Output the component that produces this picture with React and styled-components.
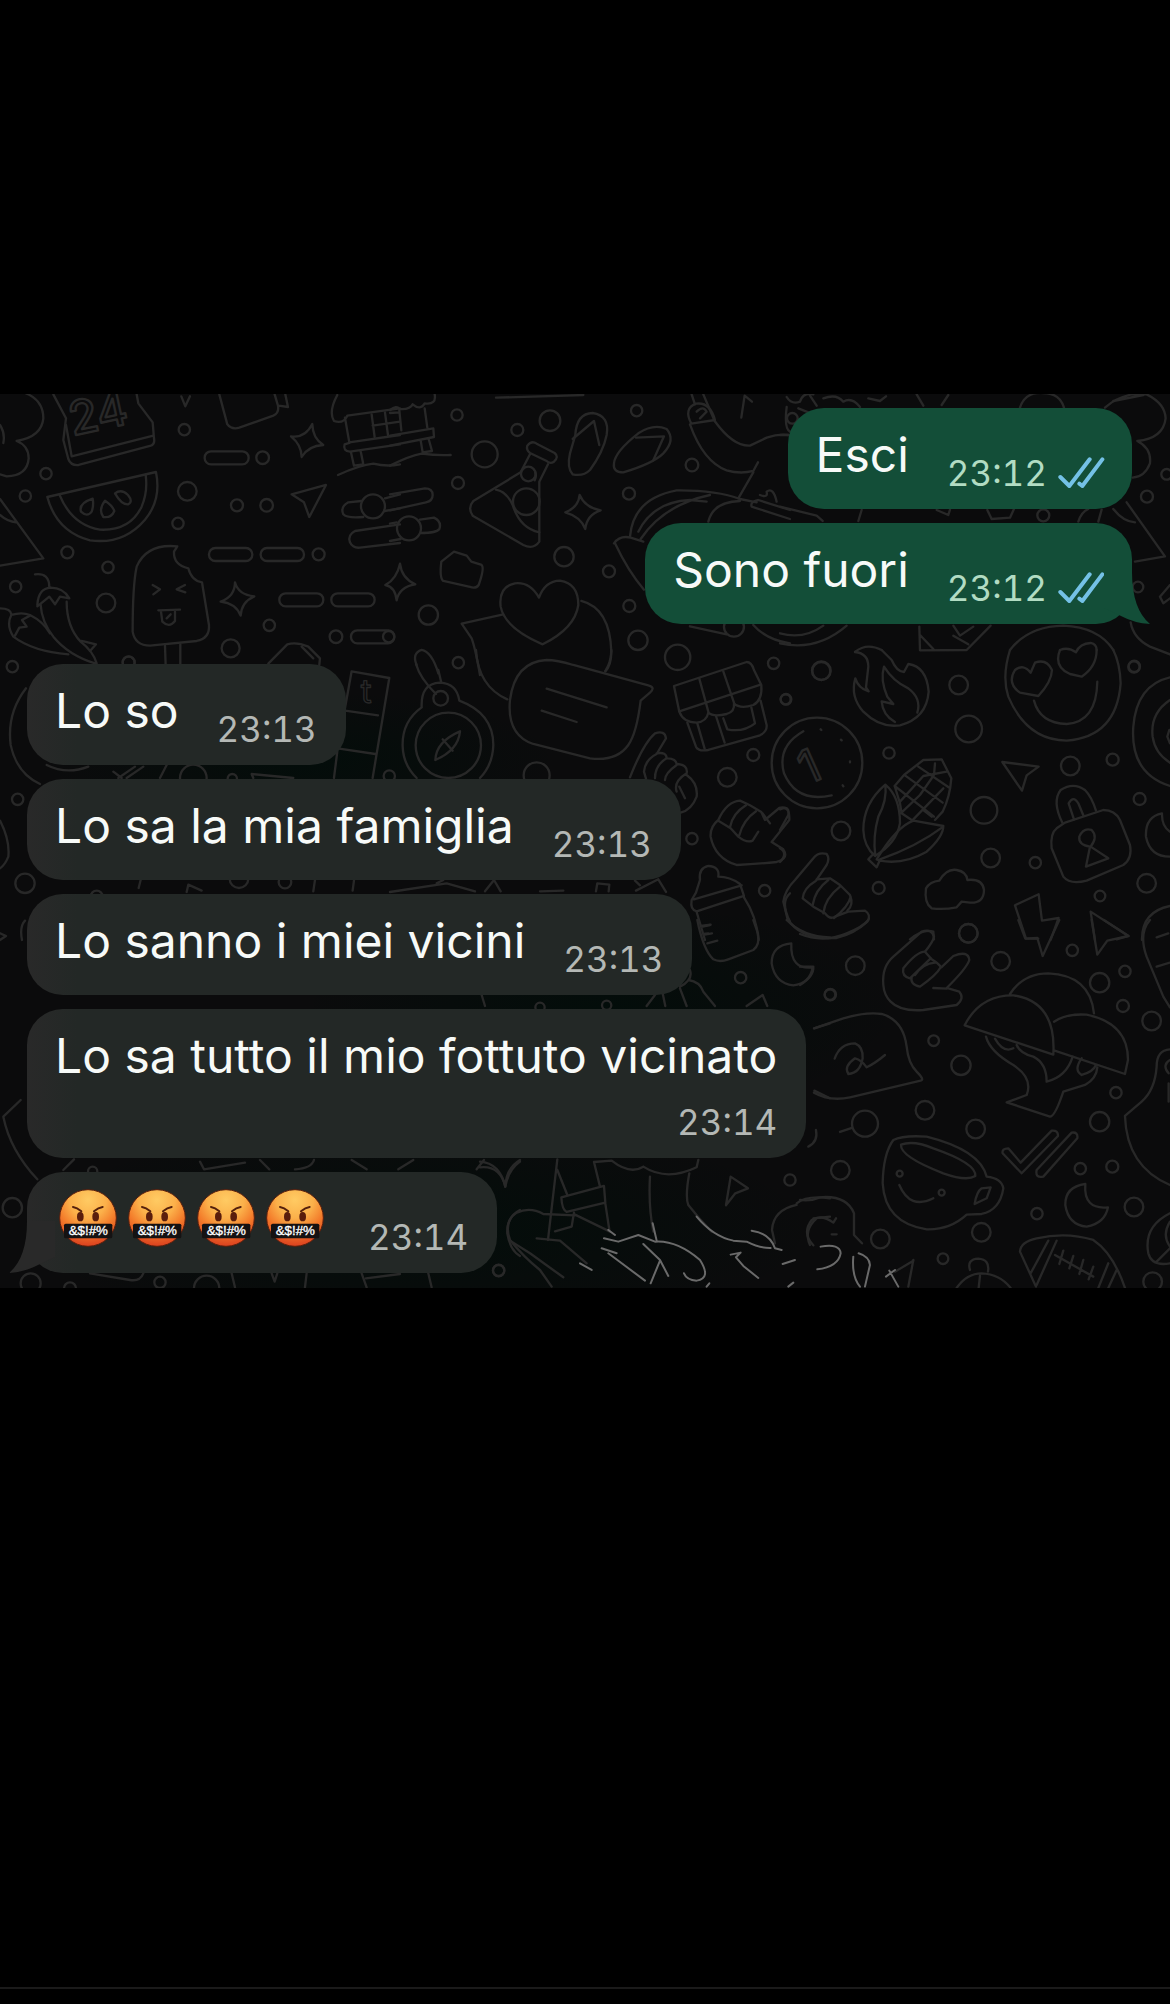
import styled, { createGlobalStyle } from "styled-components";

const colors = {
    black: "#000000",
    wallpaper: "#0b0b0c",
    doodle: "#282828",
    incoming: "#232826",
    outgoing: "#134e38",
    text: "#f7faf8",
    timeIn: "#b4b8b5",
    timeOut: "#b2dcc3",
    tick: "#74c1e6",
    line: "#1a1a1a",
};

const GlobalStyle = createGlobalStyle`
    body {
        margin: 0;
        background: ${colors.black};
        font-family: "Inter", "Liberation Sans", sans-serif;
    }
`;

const Page = styled.div`
    min-height: 100vh;
    display: flex;
    flex-direction: column;
    background: ${colors.black};
`;

const TopSpace = styled.div`
    height: 394px;
`;

const Chat = styled.main`
    position: relative;
    overflow: hidden;
    background: ${colors.wallpaper};
`;

const Wallpaper = styled.svg`
    position: absolute;
    inset: 0;
    width: 100%;
    height: 100%;
    fill: none;
    stroke: ${colors.doodle};
    stroke-width: 7;
    stroke-linecap: round;
    stroke-linejoin: round;
`;

const Messages = styled.ul`
    position: relative;
    margin: 0;
    padding: 14px 38px 15px 27px;
    list-style: none;
    display: flex;
    flex-direction: column;
    gap: 14px;
`;

const Bubble = styled.li`
    position: relative;
    align-self: ${(p) => (p.$mine ? "flex-end" : "flex-start")};
    display: flex;
    flex-direction: ${(p) => (p.$stacked ? "column" : "row")};
    align-items: flex-end;
    gap: ${(p) => (p.$stacked ? "12px" : "38px")};
    margin-top: ${(p) => (p.$newGroup ? "26px" : "0")};
    padding: 11px ${(p) => (p.$mine ? "27px" : "29px")} 18px 28px;
    border-radius: 36px;
    background: ${(p) =>
        p.$mine ? colors.outgoing : `linear-gradient(90deg, #292929 0, ${colors.incoming} 50px)`};
`;

const Text = styled.span`
    color: ${colors.text};
    font-size: 48px;
    line-height: 72px;
    white-space: nowrap;
`;

const Emojis = styled.span`
    height: 70px;
    padding: 0 6px 2px 4px;
    display: flex;
    align-items: center;
    gap: 11px;
`;

const Meta = styled.span`
    display: flex;
    align-items: center;
    gap: 11px;
    color: ${(p) => (p.$mine ? colors.timeOut : colors.timeIn)};
    font-size: 35px;
    font-variant-numeric: tabular-nums;
    line-height: 36px;
`;

const Tail = styled.svg`
    position: absolute;
    bottom: 0;
    ${(p) => (p.$mine ? "right: -18px;" : "left: -18px; transform: scaleX(-1);")}
    fill: ${(p) => (p.$mine ? colors.outgoing : "#292929")};
`;

const BottomLine = styled.hr`
    width: 100%;
    height: 2px;
    margin: auto 0 15px;
    border: 0;
    background: ${colors.line};
`;

const messages = [
    { text: "Esci", time: "23:12", mine: true },
    { text: "Sono fuori", time: "23:12", mine: true, tail: true },
    { text: "Lo so", time: "23:13", newGroup: true },
    { text: "Lo sa la mia famiglia", time: "23:13" },
    { text: "Lo sanno i miei vicini", time: "23:13" },
    { text: "Lo sa tutto il mio fottuto vicinato", time: "23:14", stacked: true },
    { emojis: 4, time: "23:14", tail: true },
];

function Ticks() {
    return (
        <svg width="47" height="32" viewBox="0 0 141 96" fill="none" stroke={colors.tick} strokeWidth="12" strokeLinecap="round" strokeLinejoin="round" role="img" aria-label="Letto">
            <path d="M7 60 L34 87 L95 7" />
            <path d="M64 80 L73 87 L133 7" />
        </svg>
    );
}

function CursingFace() {
    return (
        <svg width="58" height="58" viewBox="0 0 174 174" role="img" aria-label="faccina che impreca">
            <defs>
                <radialGradient id="face" cx="0.5" cy="0.18" r="0.85">
                    <stop offset="0" stopColor="#ffcb63" />
                    <stop offset="0.38" stopColor="#fbb04a" />
                    <stop offset="0.65" stopColor="#f37b2a" />
                    <stop offset="1" stopColor="#d83a1e" />
                </radialGradient>
            </defs>
            <circle cx="87" cy="87" r="85" fill="url(#face)" stroke="#5c1f0c" strokeWidth="3" />
            <g fill="none" stroke="#54200c" strokeWidth="6" strokeLinecap="round">
                <path d="M42 54 Q54 56 67 67" />
                <path d="M131 54 Q118 56 105 67" />
            </g>
            <ellipse cx="64" cy="83" rx="10" ry="14" fill="#5a1d0c" />
            <ellipse cx="110" cy="83" rx="10" ry="14" fill="#5a1d0c" />
            <rect x="15" y="104" width="145" height="44" rx="5" fill="#151212" />
            <text x="88" y="139" textAnchor="middle" fontFamily="Liberation Sans, sans-serif" fontSize="40" stroke="#fff" strokeWidth="1" fill="#fff">
                &amp;$!#%
            </text>
        </svg>
    );
}

// circles are [x, y, radius], pills are [x, y, width]
function Patch({ x, y, circles = [], pills = [], paths = [], children }) {
    return (
        <g transform={`translate(${x} ${y}) scale(0.3333)`}>
            {circles.map(([cx, cy, r]) => (
                <circle key={`${cx}-${cy}`} cx={cx} cy={cy} r={r} />
            ))}
            {pills.map(([px, py, w]) => (
                <rect key={`${px}-${py}`} x={px} y={py} width={w} height="39" rx="19" />
            ))}
            {paths.map((d) => (
                <path key={d} d={d} />
            ))}
            {children}
        </g>
    );
}

const topLeft = {
    circles: [
        [138, 266, 17], [76, 333, 17], [553, 134, 17], [562, 319, 28], [534, 415, 17], [788, 218, 19],
        [711, 361, 18], [800, 361, 19], [202, 502, 18], [324, 547, 17], [47, 605, 17], [318, 654, 28],
        [956, 508, 18], [808, 721, 17], [692, 790, 27], [1008, 755, 19], [37, 845, 17], [386, 832, 18],
        [1119, 364, 36],
    ],
    pills: [[614, 199, 132], [627, 489, 130], [782, 489, 130], [838, 625, 132], [994, 625, 130], [1053, 736, 130]],
    paths: [
        // cloud
        "M75 24 Q130 45 130 100 Q125 155 50 168 Q86 182 86 220 Q82 272 20 274 L0 268",
        "M0 120 Q16 145 10 174",
        // calendar
        "M160 28 L198 100 L190 165 L205 222 Q212 242 236 240 L450 183 Q466 178 462 160 L458 112 L415 55 L410 28",
        "M198 120 L215 214 L460 152",
        // watermelon
        "M142 336 L468 261 Q485 345 435 404 Q370 480 270 466 Q170 440 142 336 Z",
        "M178 328 Q215 420 300 434 Q390 438 425 365 Q444 320 437 270",
        "M278 341 Q235 355 243 380 Q262 398 275 380 Q282 360 278 341 Z",
        "M315 347 Q294 375 310 396 Q334 400 343 378 Q338 362 315 347 Z",
        "M345 325 Q364 310 384 330 Q400 350 385 358 Q365 360 345 325 Z",
        // pennant
        "M0 342 L130 520 L0 542 M0 390 Q22 410 48 412",
        // ice lolly
        "M532 484 Q440 475 410 545 Q398 600 398 740 Q405 782 450 782 L590 768 Q630 760 627 720 L606 592 Q575 588 565 550 Q520 540 522 500 Z",
        "M495 782 L497 840 M541 778 L541 840",
        "M458 600 L480 613 L460 628 M555 600 L530 613 L556 622",
        "M475 676 L540 674 M483 680 L487 710 Q508 730 525 708 L525 680 M500 700 L512 688",
        // chillies
        "M105 568 Q148 562 148 608 M112 660 Q115 610 152 608 Q190 608 208 640 L180 635 L165 658 L148 635 L112 664",
        "M122 660 Q125 710 160 755 Q205 810 285 835 M200 650 Q200 725 242 770 Q280 800 290 835",
        "M0 670 Q32 670 34 688 M34 690 Q65 680 90 690 Q130 710 150 745 M34 690 Q18 720 40 755 Q100 800 205 808",
        "M45 752 L58 728 L80 725 L66 705 L90 692 M245 768 L288 778 L270 798",
        // sparkles and arrow
        "M937 117 Q938 160 970 180 Q925 182 905 216 Q905 180 873 154 Q915 160 937 117 Z",
        "M705 592 Q715 630 763 634 Q725 650 722 692 Q708 655 662 650 Q705 635 705 592 Z",
        "M978 300 L875 328 L912 352 L928 396 Z",
        // bag
        "M658 28 L682 118 Q695 135 718 128 L820 92 Q838 85 834 62 L824 28 M836 62 L864 66 L856 28",
        "M544 34 L556 64 L570 34",
        // market stall
        "M1012 30 Q985 80 1002 108 Q1030 118 1042 92 L1200 70 M1035 98 L1048 172 L1200 150",
        "M1200 178 L1050 200 Q1028 198 1034 178 L1048 174 M1053 202 L1062 242 L1090 238 L1082 198 M1115 88 L1124 156 M1155 82 L1164 150 M1118 122 L1200 110",
        "M1014 270 Q1080 240 1120 236 Q1160 246 1200 238",
        // sliders
        "M1084 348 L1045 352 Q1020 366 1030 388 Q1040 400 1090 396 M1155 340 L1200 328 M1154 378 L1200 370",
        "M1200 418 L1065 438 Q1042 450 1050 472 Q1058 490 1080 488 L1200 474",
        // case
        "M805 836 L862 778 Q890 770 925 785 L960 820 L958 840 M905 785 L940 820",
    ],
};

const topMiddle = {
    circles: [
        [201, 90, 17], [382, 135, 18], [480, 107, 31], [284, 208, 39], [204, 294, 18], [740, 77, 17],
        [906, 240, 19], [717, 326, 18], [522, 515, 29], [657, 559, 18], [718, 663, 18], [744, 766, 29],
        [863, 817, 38], [115, 690, 29], [205, 833, 17], [1151, 835, 17], [-4, 755, 17], [415, 267, 22],
        [409, 350, 40], [57, 430, 36], [1032, 725, 30],
    ],
    paths: [
        // stall and sliders, right half
        "M0 75 Q20 60 28 72 Q60 75 68 58 Q92 78 104 55 Q140 60 134 28 M28 76 L34 136 M104 70 L112 128 M0 84 L28 82",
        "M0 152 L130 130 L132 156 L0 182 M92 166 L98 202 L126 198 L116 162 M0 242 Q60 212 95 206 Q140 212 182 210",
        "M0 328 L105 310 Q128 310 128 330 Q128 348 108 352 L0 376 M90 404 L132 398 Q156 410 148 432 Q140 444 92 444 M0 416 L20 412 M0 468 L32 462",
        "M318 38 L580 30",
        // flask
        "M412 182 Q425 165 440 176 L494 204 Q508 215 492 230 Q480 238 470 228 L420 204 Q408 195 412 182 Z",
        "M420 208 L392 262 L250 348 Q232 368 248 392 L400 480 Q430 495 448 470 L448 290 L474 238 M436 262 Q440 276 434 286",
        "M318 314 Q350 320 368 360 Q390 430 448 442",
        // flip-flops
        "M556 150 Q560 85 608 84 Q660 92 650 150 Q640 200 600 255 Q580 275 548 268 Q530 250 540 205 Z",
        "M548 162 L612 108 L628 180",
        "M672 235 Q675 200 745 145 Q790 115 830 132 Q858 165 820 205 Q790 235 700 262 Q668 262 672 235 Z",
        "M738 158 L822 154 L790 226",
        // sparkle
        "M569 330 Q585 368 632 376 Q590 390 586 432 Q572 395 526 382 Q565 368 569 330 Z",
        "M30 536 Q35 580 76 598 Q28 605 20 646 Q15 605 -14 600 Q20 582 30 536 Z",
        // puzzle
        "M154 530 L192 500 L230 512 L244 530 L275 540 Q284 550 266 600 Q258 612 240 606 L160 588 Q148 580 154 530 Z",
        // heart
        "M447 638 Q420 590 375 595 Q325 605 332 665 Q345 730 458 778 Q555 730 565 660 Q565 595 510 587 Q465 588 447 638 Z",
        "M340 688 L215 716 L245 760 Q256 790 270 870 M574 648 Q660 670 664 800 Q662 835 646 858",
        // snake
        "M905 28 L915 58 M940 28 L974 108 Q1030 185 1080 182 L1130 158 Q1165 146 1195 150 M900 118 Q940 230 1010 256 Q1050 268 1090 258 L1104 232 M1090 262 L1045 340",
        "M904 116 Q880 70 918 56 Q960 50 975 105 Z M920 80 Q940 60 950 80 L930 100",
        "M1054 98 L1064 32 L1086 50",
        // fruit bowl
        "M720 455 Q730 340 860 316 Q980 315 1050 342 L1100 352 M752 462 Q820 360 960 330 M745 440 Q790 350 900 345 L950 350 M955 410 Q970 350 1050 348",
        "M672 475 Q690 450 722 458 L760 470 M675 475 Q715 560 762 614 M1085 365 Q1080 350 1105 345 L1200 375 M1085 365 L1200 402 M1110 330 Q1135 340 1130 320 Q1150 305 1160 350",
        "M900 724 L1010 748 M1090 720 Q1130 765 1200 775",
        // tag
        "M80 840 Q65 805 95 795 Q125 800 145 865",
    ],
};

const topRight = {
    circles: [[1101, 335, 18], [1074, 606, 16], [1062, 846, 17], [1160, 268, 16], [790, 391, 18], [37, 100, 16], [124, 858, 27]],
    paths: [
        "M720 68 Q735 20 790 24 Q840 25 852 68 M410 28 L430 62 M505 30 L485 60 M265 40 L300 48 L318 34",
        "M20 36 Q35 60 60 50 Q70 20 100 28 M130 40 Q170 25 190 50 Q215 35 240 66 M20 66 Q12 130 30 140 M0 150 L26 150 M90 32 L110 62 M55 70 L85 82",
        "M975 68 Q1030 20 1100 28 Q1155 55 1157 100 Q1150 160 1072 168 Q1115 190 1110 235 Q1095 275 1058 278 M1000 48 L1090 30",
        "M1040 352 L1155 514 L1065 530 M1000 372 Q1030 410 1065 412 M895 410 Q905 380 925 372 M955 410 L965 374",
        "M0 365 L110 392 L128 408 M245 375 L235 408 M470 375 L505 390 L510 374 M622 375 L635 402 L690 398 L702 372",
        // spilled box and rings
        "M418 725 L420 796 L560 795 L632 722 M420 750 L460 792 M520 722 L540 752 L580 725 M520 752 L565 778",
        "M0 775 Q110 800 200 722 M0 745 Q70 765 130 722",
        "M1052 712 Q1060 760 1110 785 L1170 808 M1170 600 L1140 635 L1150 655 L1170 640",
        // tops of the smiley and the flame
        "M690 795 Q745 724 850 722 Q955 726 1000 795 M840 795 Q865 785 888 802 Q900 775 932 774 Q950 778 950 795",
        "M225 801 Q260 772 305 795",
    ],
};

const middleLeft = {
    circles: [[53, 448, 17], [75, 700, 29], [386, 38, 18], [1168, 378, 17], [717, 686, 28], [855, 696, 19], [580, 384, 40], [697, 386, 14], [290, 740, 18]],
    paths: [
        "M78 115 Q20 190 32 285 Q50 370 120 402 M140 345 Q200 375 265 350",
        "M0 512 Q30 570 25 620 Q15 645 0 655",
        "M1035 175 L1055 64 L1168 84 L1118 384 M1035 182 L1134 196 M1018 296 L1126 312 M1012 305 L1002 384",
        "M340 365 L365 384 M355 384 L405 350 M380 384 L430 350 M500 345 L480 384 M760 384 L755 372 L880 384",
        "M422 690 L416 714 M560 726 L565 704 L605 722 M945 690 L940 724 M1062 692 L1058 722",
        "M75 812 Q58 830 66 870 M0 850 L18 858 L0 870",
    ],
};

const centre = {
    circles: [
        [1012, 382, 28], [1090, 315, 18], [906, 566, 17], [1124, 722, 17], [1187, 148, 15], [152, 145, 22],
        [175, 286, 98], [440, 376, 39],
    ],
    paths: [
        // compass
        "M95 172 Q92 100 150 98 Q200 100 208 152 Q310 190 310 285 Q308 345 270 384 M95 172 Q35 215 38 290 Q40 345 80 384",
        "M210 244 Q205 300 136 330 Q138 275 210 244 Z M158 268 L188 302 M78 42 Q90 85 138 132 M145 60 L154 98",
        // speech bubbles
        "M258 0 Q265 110 352 148 M664 0 Q665 45 646 64",
        "M360 150 Q375 35 470 30 Q500 30 550 45 L775 106 Q798 112 780 128 L752 152 Q740 250 715 285 Q680 335 600 325 L430 282 Q350 255 360 150 Z",
        "M470 116 L650 172 M455 182 L560 216",
        // gift
        "M852 108 L1070 36 Q1085 36 1092 60 L1114 105 Q1118 150 1090 165 Q1050 178 1032 160 Q1035 185 1010 192 Q970 202 955 188 Q950 215 920 218 Q880 218 868 185 Z",
        "M868 184 L1112 104 M928 86 L955 185 M1000 64 L1032 158 M892 218 L918 290 Q925 305 955 300 L1110 256 Q1132 245 1130 225 L1112 152",
        "M922 220 L944 296 M978 198 L1004 278 M1000 205 L1012 238 Q1060 248 1095 220 L1084 172",
        // hands
        "M720 382 Q760 280 795 250 Q825 240 828 265 L800 312 Q765 330 762 365 L768 386 M800 310 Q830 305 830 325 Q795 345 795 385 M832 325 Q860 325 860 345 Q825 370 825 390 M862 342 Q895 345 890 370 Q850 395 860 425 M890 375 Q925 400 920 440 Q905 480 872 488 M868 410 L885 445",
        "M985 510 Q1010 455 1050 452 L1080 466 L1114 486 L1125 510 L1168 474 Q1200 465 1198 510 L1145 576 L1180 598 Q1198 625 1160 636 Q1100 642 1040 645 Q975 625 962 560 Q960 530 985 510 Z",
        "M985 512 L1022 535 L1045 560 Q1070 580 1088 572 L1105 545 M1020 532 Q1028 490 1068 466 M1048 556 Q1060 510 1098 484 M1118 490 L1140 520",
        // bottle
        "M930 690 Q925 655 955 648 Q990 650 985 680 Q1020 680 1050 702 L1062 738 L920 784 Q900 780 905 750 L918 728 L930 690 M912 748 L1055 706 M920 786 L945 870 M1062 742 Q1100 800 1106 870 M932 828 L962 824 M940 852 L955 850",
        "M1200 730 Q1170 755 1200 815",
        "M0 726 L170 700 L255 724 M140 700 L160 690 M285 724 L312 690 L332 724 M450 724 L520 722 M618 724 L622 700 L658 704 L656 724 M738 722 L805 688 L828 726 M735 692 L750 706",
    ],
};

const middleRight = {
    circles: [
        [124, 62, 28], [18, 148, 16], [536, 105, 28], [566, 237, 40], [327, 309, 17], [871, 348, 28],
        [998, 329, 18], [1063, 49, 17], [1079, 447, 18], [612, 481, 40], [183, 543, 28], [632, 624, 28],
        [766, 638, 17], [296, 714, 18], [960, 738, 16], [1100, 700, 28], [565, 850, 28], [111, 339, 136],
    ],
    paths: [
        // flame
        "M225 6 Q265 10 265 50 L258 112 L266 124 Q235 115 226 85 Q210 140 250 185 Q300 235 360 226 Q440 205 446 125 Q440 50 385 42 L372 66 Q350 65 335 30 L305 0",
        "M312 50 Q300 90 322 140 L340 162 L305 154 Q308 195 345 216 M312 50 Q340 95 385 115 Q425 145 412 188",
        // smiley
        "M690 0 Q665 80 685 140 Q740 270 860 272 Q1010 260 1022 100 Q1020 40 1000 0",
        "M752 68 Q730 40 705 60 Q680 100 720 128 L775 138 Q815 95 816 60 Q800 25 765 38 Z M840 0 Q820 50 870 72 L905 80 Q950 50 950 0 M762 152 Q780 220 860 222 Q950 215 952 95",
        // coin
        "M70 244 Q-10 290 12 370 Q50 460 155 436 M122 238 L124 240 M183 269 L185 271 M210 334 L210 337 M188 406 L190 409",
        // corn
        "M316 404 Q250 460 250 540 Q252 590 285 618 Q350 580 360 520 Q360 440 316 404 Z M316 404 Q322 450 295 500 Q278 560 286 618",
        "M290 628 Q350 530 400 512 L490 528 Q490 560 440 605 Q370 645 300 632 Z M300 628 Q410 590 490 530 M280 612 L265 628 L290 652 L300 630",
        "M344 408 L372 375 L430 330 L485 328 L514 385 Q510 440 488 485 L465 510 M344 408 L360 460 L365 490 L395 510 M344 408 L462 500 M375 376 L488 458 M415 350 L506 412 M360 455 L430 378 L500 365 M362 490 L420 435 L462 375 L465 340 M400 508 L490 415 M430 480 L455 500",
        // arrow
        "M667 336 L776 350 L740 376 L726 422 Z",
        // lock
        "M848 520 Q815 455 842 420 Q880 395 915 420 Q935 440 948 482 M882 508 L866 460 Q880 435 895 460 L910 496",
        "M855 518 L970 480 Q1005 480 1020 510 L1050 585 Q1058 625 1030 645 L920 692 Q870 705 850 680 L815 595 Q810 550 830 535 Z",
        "M918 650 L930 590 Q895 585 898 560 Q910 532 935 540 Q955 560 932 590 L985 625 Z",
        // cloud
        "M478 692 Q500 655 530 660 Q560 665 562 690 Q608 685 612 720 Q612 760 570 758 L545 755 L530 772 Q490 780 455 775 Q432 760 438 715 Q450 695 478 692 Z",
        // hand
        "M10 755 Q15 720 45 690 L100 625 Q115 605 140 612 Q150 625 140 645 L108 692 Q70 715 68 745 L100 770 L135 790 Q150 810 165 800 L205 785 L255 782 Q275 795 262 815 Q225 850 170 864 Q60 870 22 805 Z",
        "M110 688 L150 685 L180 705 L210 735 Q222 765 202 782 M98 765 Q105 720 145 690 M130 790 Q135 745 180 710 M162 804 Q205 770 212 740",
        // lightning, cursor, target, moon
        "M705 766 L776 733 L786 812 L836 804 L812 870 M705 766 L738 866 L775 866 M945 870 L932 785 L1045 858 L1010 868",
        "M1170 82 Q1070 105 1060 230 Q1050 370 1170 408 M1170 150 Q1110 190 1118 260 Q1125 310 1170 338 M1168 240 L1162 260 L1170 280",
        "M1146 490 Q1095 500 1098 560 Q1110 620 1170 620 M1146 490 Q1145 530 1170 545",
        "M1170 768 Q1085 785 1086 870 M390 868 Q430 835 460 845 L462 868 M0 478 Q30 465 25 495 L0 540 M0 595 Q25 610 0 636",
    ],
};

const bottomMiddle = {
    circles: [[782, 173, 17], [930, 780, 17], [56, 1051, 17], [1050, 224, 16], [180, 262, 14], [380, 256, 14]],
    paths: [
        // bottle base and moon
        "M652 0 Q670 90 700 118 Q720 128 745 118 L820 90 Q840 75 834 40 L820 0 M668 20 L690 15 M674 44 L696 40 M682 70 L712 62",
        "M934 70 Q875 75 875 130 Q885 190 940 196 Q990 190 998 142 Q930 150 934 70 Z",
        "M920 0 Q970 50 1050 52 M5 225 L15 258 M525 225 L500 258 M548 220 L556 258 M600 205 L620 258 M630 150 Q640 180 600 200 M625 180 Q660 185 670 215 L705 258 M800 258 L848 225 L862 258",
        // feet, paper plane, sneakers
        "M0 725 Q60 730 76 800 Q78 745 120 720 M232 718 L204 960 M232 750 L262 825 M342 726 L360 800 M342 726 L395 722 Q450 765 490 740 M490 740 Q560 785 650 742 L655 720",
        "M244 832 L372 798 L376 848 L260 876 Q246 870 244 832 Z M376 850 L388 930 M282 878 L275 920 L225 934 M285 884 L390 935",
        "M215 1100 L180 1050 Q130 1010 90 960 Q70 905 110 878 Q150 860 190 882 L285 886 M510 770 Q505 860 520 935 M628 760 Q615 830 625 855 Q660 900 695 935",
        "M170 955 L240 962 L320 1030 M90 962 L150 1000 L250 1072",
        "M752 770 L804 805 L766 820 L738 856 Z",
        "M950 850 Q980 825 1050 835 M950 855 Q880 870 876 930 L885 970 M1010 895 Q970 930 990 975 M1000 895 L1050 890",
        // cap outline behind the bubble
        "M1003 325 L1050 310 M1003 512 L1050 535 M985 680 Q1015 665 1008 630",
    ],
};

const bottomRight = {
    circles: [
        [505, 40, 28], [166, 137, 28], [91, 224, 17], [602, 124, 28], [817, 91, 17], [899, 188, 29],
        [975, 154, 17], [969, 258, 18], [1055, 303, 28], [401, 362, 16], [483, 436, 29], [375, 571, 28],
        [195, 611, 39], [527, 627, 28], [121, 751, 28], [948, 518, 17], [899, 605, 29], [841, 746, 17],
        [937, 740, 18], [1002, 861, 28], [711, 881, 17], [241, 957, 28], [544, 937, 28], [429, 1016, 16],
        [1058, 1085, 28],
    ],
    paths: [
        "M0 42 Q70 70 140 40 Q190 20 205 0 M0 140 L40 140 Q42 170 0 195",
        // horns hand
        "M250 195 Q245 140 280 110 L365 35 Q395 25 402 50 Q400 65 375 95 L395 118 Q415 130 424 142 L460 108 Q505 90 508 120 Q500 145 440 204 L478 215 Q495 235 470 255 L370 270 Q300 275 272 245 Q252 225 250 195 Z",
        "M375 95 Q350 95 310 145 Q305 170 330 175 L392 115 M335 170 Q330 195 360 200 Q410 165 422 142 M345 165 Q370 130 405 128 M400 204 L440 206",
        // cap
        "M42 325 L130 295 Q200 275 245 282 Q310 300 320 380 Q325 430 350 455 Q375 480 362 482 L150 532 Q90 545 42 518",
        "M104 416 Q120 370 165 370 Q190 380 188 415 Q180 460 145 462 Q130 440 165 415 Q185 420 200 442 Q225 430 255 405 M120 636 L156 624",
        // mushrooms
        "M630 222 Q670 160 745 160 Q870 165 882 280 M494 316 Q540 225 640 226 Q770 245 760 404 Z M762 305 Q800 280 860 284 Q985 310 984 420 L975 462 L764 392",
        "M558 350 Q570 395 640 435 Q700 475 680 525 L620 547 L750 590 Q765 590 790 515 L855 495 Q890 475 892 442 M585 356 Q610 400 640 385 M650 375 Q660 400 700 410 Q740 430 740 485 Q800 470 818 410 M845 415 Q820 450 845 465 Q880 455 888 435",
        // cup
        "M280 660 Q310 645 380 650 Q540 690 560 770 Q605 775 610 805 Q600 870 545 882 L500 884 Q450 930 380 928 Q255 910 248 790 Q250 700 280 660 Z",
        "M303 674 Q340 660 400 685 Q530 730 526 768 Q500 785 430 760 Q300 710 303 674 Z M545 805 L572 802 L560 835 L524 852 Q530 815 545 805 Z M298 795 Q330 870 400 835",
        // double check
        "M608 700 Q605 685 625 685 L662 728 L755 632 Q775 630 774 648 L665 760 Z M710 750 L815 638 Q835 635 832 655 L730 770 Q705 775 710 750 Z",
        // moon
        "M856 792 Q795 800 796 855 Q805 915 860 920 Q915 910 924 862 Q850 870 856 792 Z",
        // football
        "M708 1100 L660 995 Q662 965 710 955 Q800 935 880 960 Q940 1000 975 1104 M745 962 L692 1060 M770 962 L710 1095 M925 1030 L895 1104 M950 1050 L925 1104 M765 1005 L880 1070 M790 992 L778 1032 M820 1008 L808 1045 M850 1020 L838 1062 M880 1040 L866 1078",
        // lightning and cursor
        "M655 0 L676 56 L712 54 L728 108 L778 0 M875 0 L892 104 L922 62 L986 48 L912 0 M1050 0 Q1015 40 1040 110 L1090 230 L1110 262 M1070 52 L1105 40 M1070 140 L1110 128",
        // jug
        "M1110 388 Q1070 390 1070 440 Q1065 510 1025 545 L975 588 Q980 740 1110 795 M1110 420 Q1085 435 1106 460 M1106 490 L1106 545",
        "M1110 880 Q1030 920 1045 1000 Q1055 1040 1110 1030 M1110 905 Q1085 945 1110 980 M1070 1025 L1110 985",
        // pompom
        "M510 1050 Q500 1018 535 1016 Q570 1018 564 1055 M470 1104 Q500 1060 545 1060 Q600 1062 632 1104 M540 1068 L536 1104",
        "M0 840 Q30 845 60 832 Q140 825 162 880 L162 945 L186 970 M40 976 Q5 940 35 900 Q65 882 100 908 L108 895 M95 943 L110 943 M340 1020 L325 1100 M285 1055 L340 1022",
    ],
};

const bottomLeft = {
    circles: [[37, 323, 29], [480, 547, 17], [1496, 512, 17], [92, 550, 30], [620, 565, 38], [210, 565, 18], [278, 214, 14]],
    paths: [
        "M62 0 L10 50 Q30 150 112 238 M190 210 L222 178 M270 520 L390 540 Q420 545 430 520",
        "M600 185 L612 208 L735 188 M780 180 L808 208 M885 208 Q935 205 942 180 M1055 180 L1100 208 M1195 208 L1240 180 M1430 208 L1452 180 M1440 202 Q1500 195 1516 260 Q1525 210 1560 185",
        "M695 520 L705 562 M815 520 L824 545 L832 520 M920 520 L915 562 M1085 520 L1100 562 M1098 535 L1200 522 M1285 520 L1295 562 M1560 330 Q1520 350 1522 400 Q1530 450 1560 468",
    ],
};

// thin pale scratches along the lower edge
const scratches = [
    "M372 955 L415 965 L475 945 L525 965 Q590 960 660 1020 Q695 1075 650 1082 Q620 1080 612 1060",
    "M365 985 L410 1000 M385 1000 L495 1082 M490 972 L540 1020 L565 1068 M540 1022 L512 1090 M518 910 L530 962 M385 930 L405 945",
    "M650 890 Q700 950 760 962 L800 965 Q840 985 872 984 M815 932 Q870 940 885 985 L905 990",
    "M752 1004 L782 998 L768 1012 L790 1038 L835 1074 M908 1032 L945 1020 M925 1100 L940 1088 M300 1030 L335 1050 M680 1100 L688 1090",
    "M1022 980 Q1080 970 1082 1000 Q1075 1040 1012 1048 M1136 1000 Q1168 1010 1170 1035 L1155 1100 M1120 1010 Q1115 1070 1140 1100 M1218 1070 L1245 1050 M1228 1052 L1255 1100",
];

function Doodles() {
    return (
        <Wallpaper viewBox="0 394 1170 894" preserveAspectRatio="xMidYMid slice" aria-hidden="true">
            <defs>
                <radialGradient id="glow">
                    <stop offset="0" stopColor="#030d0a" />
                    <stop offset="1" stopColor="#030d0a" stopOpacity="0" />
                </radialGradient>
            </defs>
            <g stroke="none" fill="url(#glow)">
                <ellipse cx="300" cy="760" rx="260" ry="70" />
                <ellipse cx="600" cy="1010" rx="300" ry="110" />
                <ellipse cx="420" cy="1230" rx="400" ry="110" />
            </g>
            <Patch x={0} y={385} {...topLeft}>
                <text x="218" y="152" transform="rotate(-12 218 152)" fontSize="140" fontWeight="500">
                    24
                </text>
            </Patch>
            <Patch x={390} y={385} {...topMiddle} />
            <Patch x={780} y={385} {...topRight} />
            <Patch x={0} y={650} {...middleLeft}>
                <text x="1082" y="160" fontSize="100" strokeWidth="4">
                    t
                </text>
            </Patch>
            <Patch x={390} y={650} {...centre} />
            <Patch x={780} y={650} {...middleRight}>
                <text x="82" y="405" transform="rotate(-24 82 405)" fontSize="138">
                    1
                </text>
            </Patch>
            <Patch x={480} y={920} {...bottomMiddle} />
            <Patch x={800} y={920} {...bottomRight}>
                <circle cx="299" cy="761" r="9" />
                <circle cx="425" cy="818" r="9" />
            </Patch>
            <Patch x={0} y={1100} {...bottomLeft} />
            <g stroke="#6a6a6a" strokeWidth="6">
                <Patch x={480} y={920} paths={scratches} />
            </g>
        </Wallpaper>
    );
}

function Message({ text, emojis, time, mine, tail, newGroup, stacked }) {
    return (
        <Bubble $mine={mine} $newGroup={newGroup} $stacked={stacked}>
            {tail && (
                <Tail $mine={mine} width="54" height="52" viewBox="0 0 54 52" aria-hidden="true">
                    <path d="M36 0 Q36 37 54 52 Q38 51 25 44 L8 36 L8 0 Z" />
                </Tail>
            )}
            {text && <Text>{text}</Text>}
            {emojis && (
                <Emojis>
                    {Array.from({ length: emojis }, (_, i) => (
                        <CursingFace key={i} />
                    ))}
                </Emojis>
            )}
            <Meta $mine={mine}>
                <time>{time}</time>
                {mine && <Ticks />}
            </Meta>
        </Bubble>
    );
}

export default function App() {
    return (
        <Page>
            <GlobalStyle />
            <TopSpace />
            <Chat>
                <Doodles />
                <Messages>
                    {messages.map((message, i) => (
                        <Message key={i} {...message} />
                    ))}
                </Messages>
            </Chat>
            <BottomLine />
        </Page>
    );
}
